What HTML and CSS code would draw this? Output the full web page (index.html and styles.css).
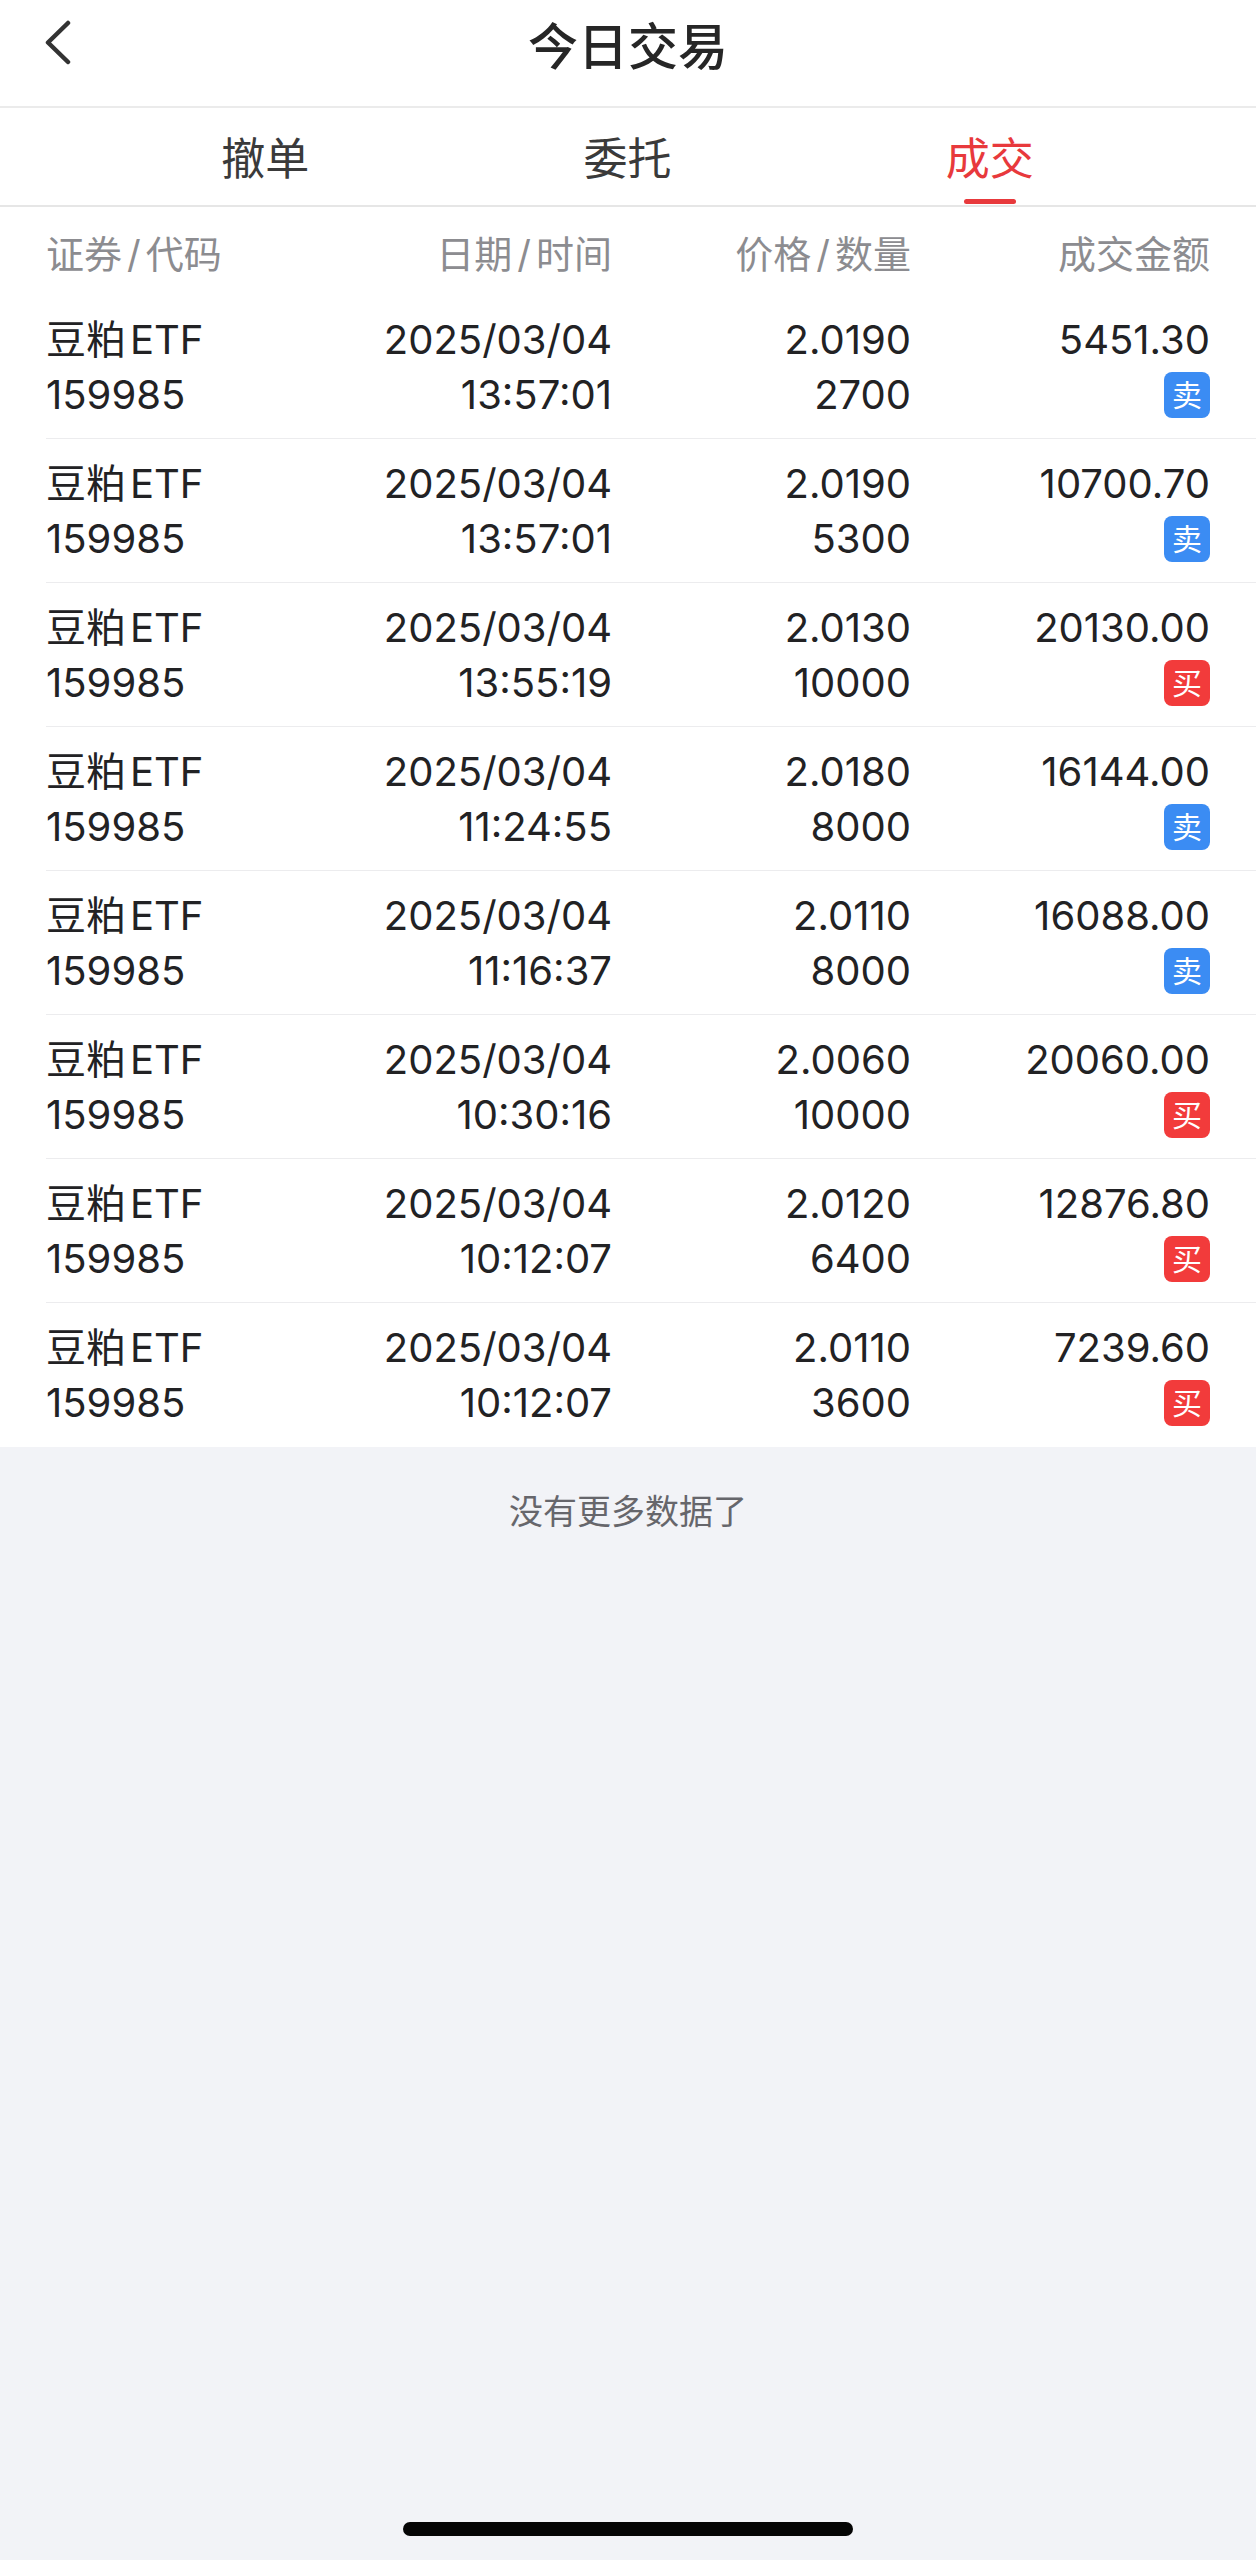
FILE: index.html
```html
<!DOCTYPE html>
<html lang="zh-CN">
<head>
 <meta charset="UTF-8">
 <meta name="viewport" content="width=device-width, initial-scale=1.0">
 <title>今日交易</title>
 <link rel="stylesheet" href="styles.css">
</head>
<body>
 <div class="navbar">
 <div class="nav-back">
 <svg width="30" height="46" viewBox="0 0 30 46">
 <path d="M24 3 L4 22.5 L24 42" fill="none" stroke="#333" stroke-width="4.5" stroke-linecap="round" stroke-linejoin="round"/>
 </svg>
 </div>
 <div class="nav-title">今日交易</div>
 <div></div>
 </div>

 <div class="tabs">
 <div class="tab">撤单</div>
 <div class="tab">委托</div>
 <div class="tab active">成交</div>
 </div>

 <div class="list">
 <div class="list-head">
 <div>证券<span class="slash">/</span>代码</div>
 <div class="r">日期<span class="slash">/</span>时间</div>
 <div class="r">价格<span class="slash">/</span>数量</div>
 <div class="r">成交金额</div>
 </div>
 <div id="rows"></div>
 </div>

 <div class="no-more">没有更多数据了</div>

 <div class="home-bar"></div>

 <script>
 const trades = [
 { time: '13:57:01', price: '2.0190', qty: '2700', amount: '5451.30', side: 'sell' },
 { time: '13:57:01', price: '2.0190', qty: '5300', amount: '10700.70', side: 'sell' },
 { time: '13:55:19', price: '2.0130', qty: '10000', amount: '20130.00', side: 'buy' },
 { time: '11:24:55', price: '2.0180', qty: '8000', amount: '16144.00', side: 'sell' },
 { time: '11:16:37', price: '2.0110', qty: '8000', amount: '16088.00', side: 'sell' },
 { time: '10:30:16', price: '2.0060', qty: '10000', amount: '20060.00', side: 'buy' },
 { time: '10:12:07', price: '2.0120', qty: '6400', amount: '12876.80', side: 'buy' },
 { time: '10:12:07', price: '2.0110', qty: '3600', amount: '7239.60', side: 'buy' }
 ];

 const rows = document.getElementById('rows');
 trades.forEach(t => {
 const row = document.createElement('div');
 row.className = 'trade-row';
 row.innerHTML = `
 <div class="cell">
 <div class="line">豆粕<span class="etf">ETF</span></div>
 <div class="line">159985</div>
 </div>
 <div class="cell r">
 <div class="line">2025/03/04</div>
 <div class="line">${t.time}</div>
 </div>
 <div class="cell r">
 <div class="line">${t.price}</div>
 <div class="line">${t.qty}</div>
 </div>
 <div class="cell r">
 <div class="line">${t.amount}</div>
 <div class="line"><span class="badge ${t.side}">${t.side === 'buy' ? '买' : '卖'}</span></div>
 </div>
 `;
 rows.appendChild(row);
 });
 </script>
</body>
</html>
```

FILE: styles.css
```css
body {
margin: 0;
min-height: 2560px;
background: #f2f3f7;
font-family: Inter, "Noto Sans CJK SC", sans-serif;
color: #1c1c1e;
}
.navbar {
display: grid;
grid-template-columns: 1fr auto 1fr;
align-items: center;
height: 86px;
padding-bottom: 20px;
background: white;
border-bottom: 2px solid #ebebeb;
}
.nav-back {
padding-left: 44px;
display: flex;
}
.nav-title {
font-size: 50px;
font-weight: 500;
color: #262626;
}
.tabs {
display: flex;
padding: 0 85px 0 84px;
height: 97px;
background: white;
border-bottom: 2px solid #e6e6e6;
}
.tab {
flex: 1;
position: relative;
display: flex;
align-items: center;
justify-content: center;
font-size: 44px;
color: #3a3a3a;
padding-bottom: 2px;
}
.tab.active {
color: #e8393c;
}
.tab.active::after {
content: "";
position: absolute;
bottom: 1px;
left: 50%;
width: 52px;
height: 5px;
margin-left: -26px;
border-radius: 3px;
background: #e8393c;
}
.list {
background: white;
padding-left: 46px;
}
.list-head,
.trade-row {
display: grid;
grid-template-columns: 300px 266px 299px 1fr;
padding-right: 46px;
}
.list-head {
height: 88px;
align-items: center;
font-size: 38px;
color: #8c8c90;
}
.slash {
padding: 0 5px;
}
.r {
text-align: right;
}
.trade-row {
padding: 17px 46px 16px 0;
border-bottom: 1px solid #ececee;
font-size: 40px;
color: #222224;
}
.trade-row:last-child {
border-bottom-color: white;
}
.line {
height: 55px;
line-height: 55px;
white-space: nowrap;
}
.etf {
margin-left: 4px;
}
.cell.r .line {
display: flex;
align-items: center;
justify-content: flex-end;
}
.badge {
display: flex;
align-items: center;
justify-content: center;
width: 46px;
height: 46px;
border-radius: 8px;
font-size: 30px;
line-height: 1;
color: white;
}
.badge.sell {
background: #3b8cf3;
}
.badge.buy {
background: #f23b3b;
}
.no-more {
padding-top: 44px;
line-height: 42px;
text-align: center;
font-size: 34px;
color: #66666b;
}
.home-bar {
position: absolute;
top: 2522px;
left: 403px;
width: 450px;
height: 14px;
border-radius: 7px;
background: #050505;
}
```
